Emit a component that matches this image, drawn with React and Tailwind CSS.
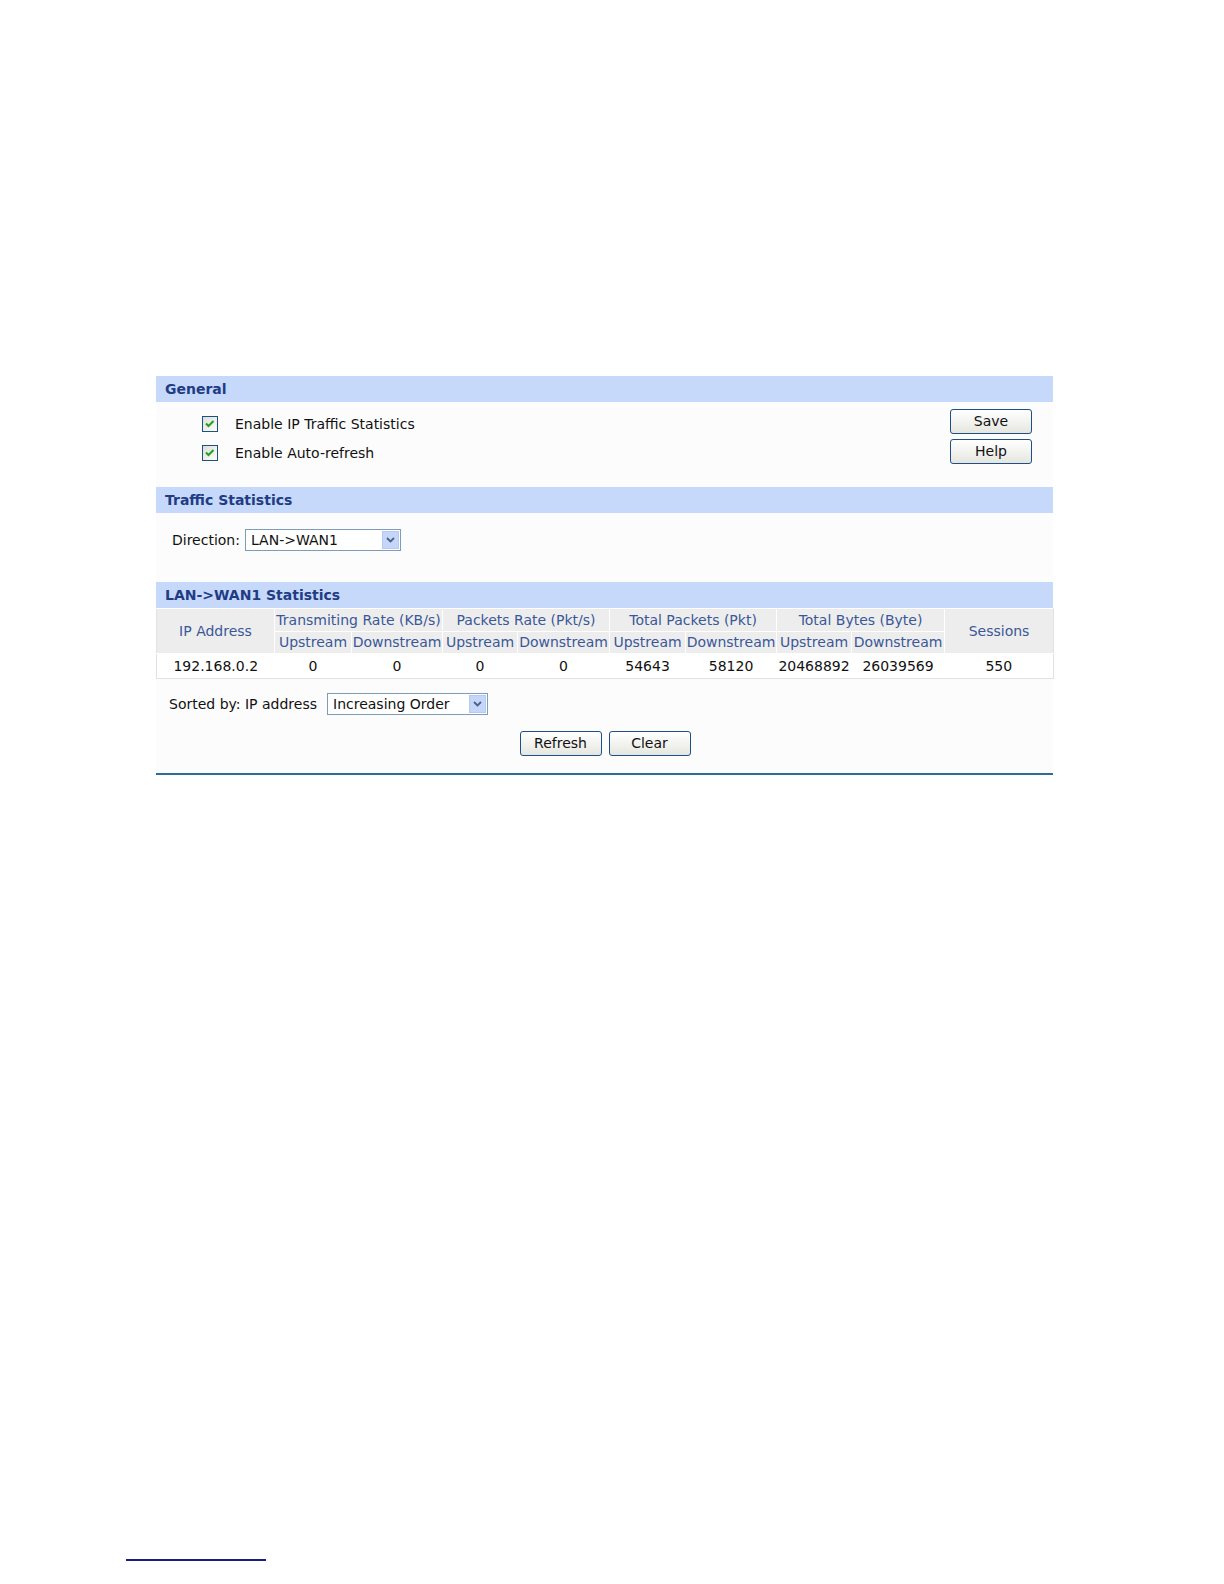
import React from "react";

const font = { fontFamily: '"DejaVu Sans", Verdana, sans-serif' };

const SectionHeader = ({ title }) => (
  <div className="h-[26px] bg-[#c6d9fa] flex items-center pl-[9px] text-[14px] font-bold text-[#1f3c84]">
    {title}
  </div>
);

const Checkbox = () => (
  <svg width="16" height="16" viewBox="0 0 16 16" className="shrink-0">
    <defs>
      <linearGradient id="cbg" x1="0" y1="0" x2="1" y2="1">
        <stop offset="0" stopColor="#dcdcd6" />
        <stop offset="1" stopColor="#ffffff" />
      </linearGradient>
    </defs>
    <rect x="0.5" y="0.5" width="15" height="15" fill="url(#cbg)" stroke="#1c5180" />
    <path d="M4 7.5 L6.5 10 L11.5 5" fill="none" stroke="#21a121" strokeWidth="2" />
  </svg>
);

const Select = ({ value, width }) => (
  <div
    className="h-[22px] bg-white border border-[#7f9db9] flex items-center justify-between pl-[5px] pr-[1px] text-[14px] text-[#111]"
    style={{ width }}
  >
    <span>{value}</span>
    <div className="w-[17px] h-[18px] bg-[#c5d6fb] border border-[#b7c9f1] flex items-center justify-center">
      <svg width="9" height="6" viewBox="0 0 9 6">
        <path d="M1 1 L4.5 4.5 L8 1" fill="none" stroke="#4d6185" strokeWidth="1.8" />
      </svg>
    </div>
  </div>
);

const Button = ({ label }) => (
  <button className="w-[82px] h-[25px] rounded-[3px] border border-[#1f4f86] bg-gradient-to-b from-white to-[#e6e6e0] text-[14px] text-[#111]">
    {label}
  </button>
);

const cols = [
  ["Upstream", 77],
  ["Downstream", 91],
  ["Upstream", 75],
  ["Downstream", 92],
  ["Upstream", 76],
  ["Downstream", 91],
  ["Upstream", 75],
  ["Downstream", 93],
];

const groups = [
  "Transmiting Rate (KB/s)",
  "Packets Rate (Pkt/s)",
  "Total Packets (Pkt)",
  "Total Bytes (Byte)",
];

const row = ["192.168.0.2", "0", "0", "0", "0", "54643", "58120", "20468892", "26039569", "550"];

export default function App() {
  return (
    <div className="w-[1224px] h-[1584px] overflow-hidden bg-white pt-[376px] pl-[126px]" style={font}>
      <div className="ml-[30px] w-[897px] bg-[#fcfcfc]">
        <SectionHeader title="General" />
        <div className="h-[85px] flex justify-between pl-[46px] pr-[21px]">
          <div className="flex flex-col gap-[13px] pt-[14px]">
            <div className="h-[16px] flex items-center gap-[17px] text-[14px] text-[#111]">
              <Checkbox />
              <span>Enable IP Traffic Statistics</span>
            </div>
            <div className="h-[16px] flex items-center gap-[17px] text-[14px] text-[#111]">
              <Checkbox />
              <span>Enable Auto-refresh</span>
            </div>
          </div>
          <div className="flex flex-col gap-[5px] pt-[7px]">
            <Button label="Save" />
            <Button label="Help" />
          </div>
        </div>

        <SectionHeader title="Traffic Statistics" />
        <div className="h-[69px] pl-[16px] pt-[16px] flex items-start gap-[5px]">
          <span className="text-[14px] text-[#111] leading-[22px]">Direction:</span>
          <Select value="LAN->WAN1" width={156} />
        </div>

        <SectionHeader title="LAN->WAN1 Statistics" />
        <table className="border-collapse text-[14px] table-fixed w-[897px]">
          <colgroup>
            <col style={{ width: 118 }} />
            {cols.map((c, i) => (
              <col key={i} style={{ width: c[1] }} />
            ))}
            <col style={{ width: 109 }} />
          </colgroup>
          <thead className="text-[#3a5898]">
            <tr className="h-[23px]">
              <th rowSpan={2} className="bg-[#ededed] font-normal border border-white border-l-[#e2e2e2]">
                IP Address
              </th>
              {groups.map((g) => (
                <th key={g} colSpan={2} className="bg-[#ededed] font-normal border border-white whitespace-nowrap">
                  {g}
                </th>
              ))}
              <th rowSpan={2} className="bg-[#ededed] font-normal border border-white border-r-[#e2e2e2]">
                Sessions
              </th>
            </tr>
            <tr className="h-[21px]">
              {cols.map((c, i) => (
                <th key={i} className="bg-[#ededed] font-normal border border-white whitespace-nowrap">
                  {c[0]}
                </th>
              ))}
            </tr>
          </thead>
          <tbody>
            <tr className="h-[25px] bg-white">
              {row.map((v, i) => (
                <td key={i} className="text-center text-[#111] border-b border-[#e2e2e2] first:border-l last:border-r">
                  {v}
                </td>
              ))}
            </tr>
          </tbody>
        </table>

        <div className="h-[36px] pl-[13px] pt-[14px] flex items-center gap-[10px]">
          <span className="text-[14px] text-[#111]">Sorted by: IP address</span>
          <Select value="Increasing Order" width={161} />
        </div>
        <div className="flex justify-center gap-[7px] pt-[16px] pb-[17px] pl-[1px]">
          <Button label="Refresh" />
          <Button label="Clear" />
        </div>
        <div className="h-[2px] bg-[#2f6a99]" />
      </div>

      <div className="mt-[784px] w-[140px] h-[2px] bg-[#1c1c7c]" />
    </div>
  );
}
